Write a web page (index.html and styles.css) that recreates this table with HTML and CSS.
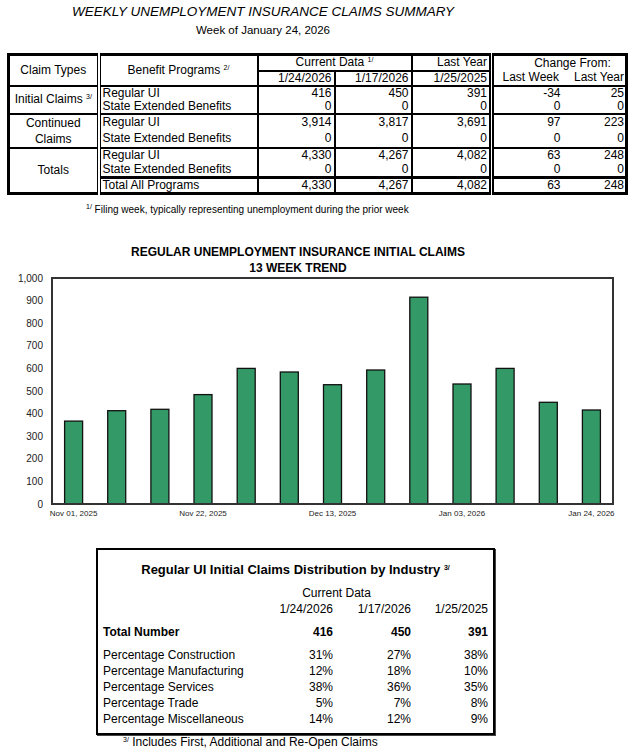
FILE: index.html
```html
<!DOCTYPE html>
<html lang="en">
<head>
  <meta charset="UTF-8">
  <title>Weekly Unemployment Insurance Claims Summary</title>
  <link rel="stylesheet" href="styles.css">
</head>
<body>

<div class="head">
  <h1>WEEKLY UNEMPLOYMENT INSURANCE CLAIMS SUMMARY</h1>
  <p>Week of January 24, 2026</p>
</div>

<table class="claims">
  <colgroup>
    <col class="c-type">
    <col class="c-prog">
    <col class="c-num">
    <col class="c-num">
    <col class="c-ly">
    <col class="c-wk">
    <col class="c-yr">
  </colgroup>
  <thead>
    <tr class="h1">
      <th rowspan="2" class="type">Claim Types</th>
      <th rowspan="2" class="prog-h">Benefit Programs <sup>2/</sup></th>
      <th colspan="2" class="cur">Current Data <sup>1/</sup></th>
      <th class="ly top">Last Year</th>
      <th colspan="2" class="chg">Change From:</th>
    </tr>
    <tr class="h2">
      <th class="num">1/24/2026</th>
      <th class="num">1/17/2026</th>
      <th class="num ly">1/25/2025</th>
      <th class="wk-h">Last Week</th>
      <th class="yr">Last Year</th>
    </tr>
  </thead>
  <tbody class="grp init">
    <tr>
      <td rowspan="2" class="type">Initial Claims <sup>3/</sup></td>
      <td class="prog">Regular UI</td>
      <td class="num">416</td><td class="num">450</td><td class="num ly">391</td>
      <td class="wk">-34</td><td class="yr">25</td>
    </tr>
    <tr>
      <td class="prog">State Extended Benefits</td>
      <td class="num">0</td><td class="num">0</td><td class="num ly">0</td>
      <td class="wk">0</td><td class="yr">0</td>
    </tr>
  </tbody>
  <tbody class="grp cont">
    <tr>
      <td rowspan="2" class="type two">Continued<br>Claims</td>
      <td class="prog">Regular UI</td>
      <td class="num">3,914</td><td class="num">3,817</td><td class="num ly">3,691</td>
      <td class="wk">97</td><td class="yr">223</td>
    </tr>
    <tr>
      <td class="prog">State Extended Benefits</td>
      <td class="num">0</td><td class="num">0</td><td class="num ly">0</td>
      <td class="wk">0</td><td class="yr">0</td>
    </tr>
  </tbody>
  <tbody class="grp tot">
    <tr>
      <td rowspan="3" class="type">Totals</td>
      <td class="prog">Regular UI</td>
      <td class="num">4,330</td><td class="num">4,267</td><td class="num ly">4,082</td>
      <td class="wk">63</td><td class="yr">248</td>
    </tr>
    <tr>
      <td class="prog">State Extended Benefits</td>
      <td class="num">0</td><td class="num">0</td><td class="num ly">0</td>
      <td class="wk">0</td><td class="yr">0</td>
    </tr>
    <tr class="all">
      <td class="prog">Total All Programs</td>
      <td class="num">4,330</td><td class="num">4,267</td><td class="num ly">4,082</td>
      <td class="wk">63</td><td class="yr">248</td>
    </tr>
  </tbody>
</table>

<p class="note1"><sup>1/</sup> Filing week, typically representing unemployment during the prior week</p>

<h2 class="chart-title">REGULAR UNEMPLOYMENT INSURANCE INITIAL CLAIMS<br>13 WEEK TREND</h2>

<svg class="plot" width="630" height="246" viewBox="0 0 630 246">
  <g class="ylab" text-anchor="end">
    <text x="43" y="231.5">0</text>
    <text x="43" y="208.9">100</text>
    <text x="43" y="186.3">200</text>
    <text x="43" y="163.7">300</text>
    <text x="43" y="141.1">400</text>
    <text x="43" y="118.5">500</text>
    <text x="43" y="95.9">600</text>
    <text x="43" y="73.3">700</text>
    <text x="43" y="50.7">800</text>
    <text x="43" y="28.1">900</text>
    <text x="43" y="5.5">1,000</text>
  </g>
  <g class="bars">
    <rect x="64.6" y="145.1" width="18" height="82.9"/>
    <rect x="107.7" y="134.7" width="18" height="93.3"/>
    <rect x="150.9" y="133.3" width="18" height="94.7"/>
    <rect x="194.0" y="118.6" width="18" height="109.4"/>
    <rect x="237.2" y="92.4" width="18" height="135.6"/>
    <rect x="280.3" y="96.0" width="18" height="132.0"/>
    <rect x="323.5" y="108.7" width="18" height="119.3"/>
    <rect x="366.7" y="94.0" width="18" height="134.0"/>
    <rect x="409.8" y="21.2" width="18" height="206.8"/>
    <rect x="453.0" y="108.0" width="18" height="120.0"/>
    <rect x="496.1" y="92.4" width="18" height="135.6"/>
    <rect x="539.3" y="126.3" width="18" height="101.7"/>
    <rect x="582.4" y="134.0" width="18" height="94.0"/>
  </g>
  <rect class="frame" x="52" y="2" width="561" height="226"/>
  <g class="xlab" text-anchor="middle">
    <text x="73.6" y="240">Nov 01, 2025</text>
    <text x="203" y="240">Nov 22, 2025</text>
    <text x="332.5" y="240">Dec 13, 2025</text>
    <text x="462" y="240">Jan 03, 2026</text>
    <text x="591.4" y="240">Jan 24, 2026</text>
  </g>
</svg>

<div class="dist">
  <h3>Regular UI Initial Claims Distribution by Industry <sup>3/</sup></h3>
  <table class="dist-table">
    <colgroup>
      <col class="d-label">
      <col class="d-a">
      <col class="d-b">
      <col class="d-c">
    </colgroup>
    <tr>
      <td></td>
      <td colspan="2" class="cap">Current Data</td>
      <td></td>
    </tr>
    <tr>
      <td></td>
      <td class="val">1/24/2026</td>
      <td class="val">1/17/2026</td>
      <td class="val">1/25/2025</td>
    </tr>
    <tr class="total">
      <td>Total Number</td>
      <td class="val">416</td>
      <td class="val">450</td>
      <td class="val">391</td>
    </tr>
    <tr class="first">
      <td>Percentage Construction</td>
      <td class="val">31%</td>
      <td class="val">27%</td>
      <td class="val">38%</td>
    </tr>
    <tr>
      <td>Percentage Manufacturing</td>
      <td class="val">12%</td>
      <td class="val">18%</td>
      <td class="val">10%</td>
    </tr>
    <tr>
      <td>Percentage Services</td>
      <td class="val">38%</td>
      <td class="val">36%</td>
      <td class="val">35%</td>
    </tr>
    <tr>
      <td>Percentage Trade</td>
      <td class="val">5%</td>
      <td class="val">7%</td>
      <td class="val">8%</td>
    </tr>
    <tr>
      <td>Percentage Miscellaneous</td>
      <td class="val">14%</td>
      <td class="val">12%</td>
      <td class="val">9%</td>
    </tr>
  </table>
</div>

<p class="note3"><sup>3/</sup> Includes First, Additional and Re-Open Claims</p>

</body>
</html>
```

FILE: styles.css
```css
body {
  margin: 0;
  width: 630px;
  font-family: "Liberation Sans", Arial, sans-serif;
  color: #000;
  background: #fff;
}
sup {
  font-size: 7px;
  line-height: 0;
  vertical-align: 4px;
}

/* page heading */
.head {
  width: 526px;
  padding-top: 4px;
  text-align: center;
}
.head h1 {
  margin: 0;
  font-size: 13.5px;
  line-height: 16px;
  font-weight: normal;
  font-style: italic;
}
.head p {
  margin: 3px 0 0;
  font-size: 11.5px;
  line-height: 14px;
}

/* summary table */
.claims {
  margin: 16px 0 0 7px;
  width: 621px;
  table-layout: fixed;
  border-collapse: collapse;
  border: 3px solid #000;
  font-size: 12px;
  line-height: 13px;
}
.c-type { width: 90px; }
.c-prog { width: 159px; }
.c-num { width: 77px; }
.c-ly { width: 80px; }
.c-wk { width: 76px; }
.c-yr { width: 59px; }
.claims th,
.claims td {
  padding: 0 2px;
  font-weight: normal;
  vertical-align: middle;
  white-space: nowrap;
}
.claims thead {
  border-bottom: 2px solid #000;
}
.claims .grp {
  border-top: 2px solid #000;
}
.h1 { height: 16px; }
.h2 { height: 14px; }
.init tr { height: 14px; }
.cont tr { height: 17px; }
.tot tr { height: 15px; }
.tot tr.all { height: 16px; }
.claims .all td {
  border-top: 3px solid #000;
}
.type {
  text-align: center;
  border-right: 4px double #000;
}
.type.two {
  line-height: 16px;
}
.prog-h {
  text-align: center;
  border-right: 2px solid #000;
}
.prog {
  text-align: left;
  border-right: 2px solid #000;
}
.cur {
  text-align: center;
  border-right: 2px solid #000;
  border-bottom: 2px solid #000;
}
.claims .top {
  text-align: right;
  border-bottom: 2px solid #000;
}
.num {
  text-align: right;
  border-right: 2px solid #000;
}
.claims .ly {
  border-right: 5px double #000;
}
.claims .chg {
  text-align: center;
  padding-left: 28px;
}
.wk-h {
  text-align: center;
}
.claims .wk {
  text-align: right;
  padding-right: 7px;
}
.claims .yr {
  text-align: right;
  padding-right: 1px;
}

.note1 {
  margin: 8px 0 0;
  padding-left: 86px;
  font-size: 10px;
  line-height: 14px;
}

/* trend chart */
.chart-title {
  width: 596px;
  margin: 27px 0 0;
  font-size: 12px;
  line-height: 16px;
  font-weight: bold;
  text-align: center;
}
.plot {
  display: block;
  overflow: visible;
}
.ylab {
  font-size: 10px;
  fill: #222;
}
.xlab {
  font-size: 8px;
  fill: #222;
}
.bars rect {
  fill: #339966;
  stroke: #111;
  stroke-width: 1.3;
}
.frame {
  fill: none;
  stroke: #333;
  stroke-width: 2;
}

/* industry box */
.dist {
  box-sizing: border-box;
  width: 399px;
  margin: 26px 0 0 96px;
  padding: 12px 0 6px;
  border: 2px solid #000;
  box-shadow: 1px 1px 0 #444;
}
.dist h3 {
  margin: 0;
  font-size: 13px;
  line-height: 16px;
  text-align: center;
}
.dist-table {
  margin: 7px 0 0 5px;
  width: 385px;
  table-layout: fixed;
  border-collapse: collapse;
  font-size: 12px;
  line-height: 16px;
}
.dist-table td {
  padding: 0;
  white-space: nowrap;
}
.d-label { width: 159px; }
.d-a { width: 71px; }
.d-b { width: 78px; }
.d-c { width: 77px; }
.cap {
  text-align: center;
}
.val {
  text-align: right;
}
.dist-table .total td {
  padding-top: 7px;
  font-weight: bold;
}
.dist-table .first td {
  padding-top: 7px;
}

.note3 {
  margin: 0;
  padding-left: 123px;
  font-size: 12px;
  line-height: 14px;
}
```
